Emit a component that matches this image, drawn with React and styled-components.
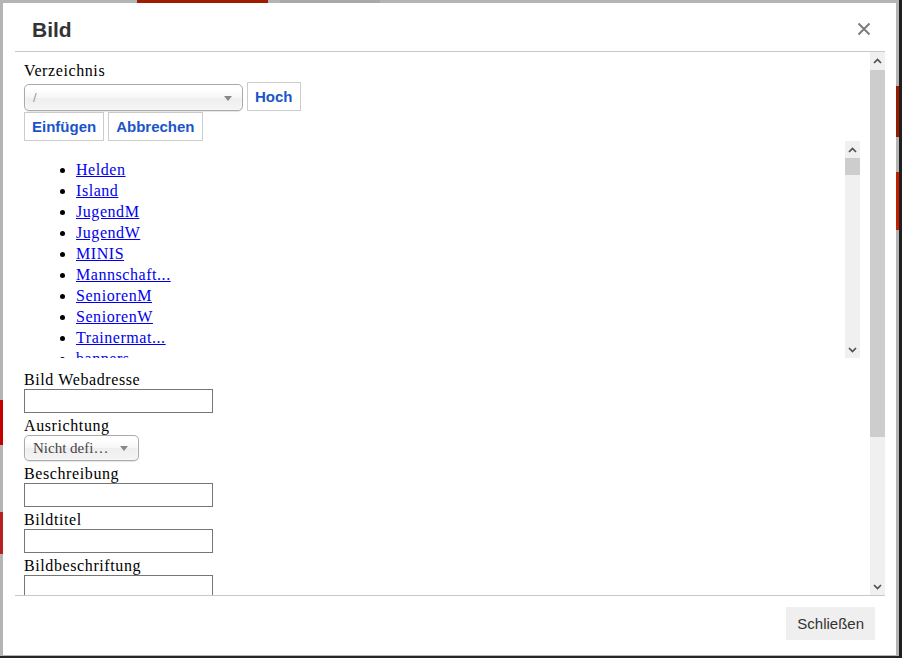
import React from 'react';
import styled, { createGlobalStyle } from 'styled-components';

const Global = createGlobalStyle`
  html, body { margin: 0; padding: 0; height: 100%; }
  body {
    background: #b4b4b4;
    overflow: hidden;
    font-family: "Liberation Serif", "Times New Roman", serif;
  }
`;

const Backdrop = styled.div`
  position: fixed;
  inset: 0;
  background: #b4b4b4;
  border-right: 3px solid #1f1f1f;
  border-bottom: 2px solid #262626;
`;

const Patch = styled.div`
  position: absolute;
  left: ${p => p.$x}px;
  top: ${p => p.$y}px;
  width: ${p => p.$w}px;
  height: ${p => p.$h}px;
  background: ${p => p.$c};
`;

const Modal = styled.div`
  position: fixed;
  left: 3px;
  top: 3px;
  width: 893px;
  height: 652px;
  box-sizing: border-box;
  padding: 0 11px 0 12px;
  background: #fff;
  display: flex;
  flex-direction: column;
`;

const Header = styled.div`
  flex: 0 0 49px;
  box-sizing: border-box;
  display: flex;
  align-items: flex-start;
  justify-content: space-between;
  padding: 15px 14px 0 17px;
  border-bottom: 1px solid #c8c8c8;
`;

const Title = styled.h4`
  margin: 0;
  font: bold 21px/24px "Liberation Sans", Arial, sans-serif;
  color: #333;
`;

const CloseButton = styled.button`
  margin-top: 4px;
  padding: 0;
  border: 0;
  background: none;
  width: 14px;
  height: 14px;
  display: flex;
  cursor: pointer;
`;

/* ---------- scrollbar (drawn) ---------- */
const ScrollBar = styled.div`
  flex: 0 0 15px;
  display: flex;
  flex-direction: column;
  background: #f0f0f0;
`;

const ScrollArrow = styled.div`
  flex: 0 0 17px;
  display: flex;
  align-items: center;
  justify-content: center;
`;

const ScrollTrack = styled.div`
  flex: 1 1 auto;
  display: flex;
  flex-direction: column;
`;

const ScrollThumb = styled.div`
  margin-top: ${p => p.$top}px;
  height: ${p => p.$height}px;
  background: #cdcdcd;
`;

function Chevron({ dir }) {
  return (
    <svg width="9" height="6" viewBox="0 0 9 6">
      <path
        d={dir === 'up' ? 'M1 5 L4.5 1.5 L8 5' : 'M1 1 L4.5 4.5 L8 1'}
        stroke="#505050"
        strokeWidth="1.7"
        fill="none"
      />
    </svg>
  );
}

function Scroller({ top, height }) {
  return (
    <ScrollBar>
      <ScrollArrow>
        <Chevron dir="up" />
      </ScrollArrow>
      <ScrollTrack>
        <ScrollThumb $top={top} $height={height} />
      </ScrollTrack>
      <ScrollArrow>
        <Chevron dir="down" />
      </ScrollArrow>
    </ScrollBar>
  );
}

const Body = styled.div`
  flex: 1 1 auto;
  min-height: 0;
  display: flex;
`;

const BodyContent = styled.div`
  flex: 1 1 auto;
  min-width: 0;
  overflow: hidden;
  padding: 6px 10px 0 9px;
  font-size: 16px;
  color: #000;
`;

const Label = styled.div`
  padding-top: 3px;
  line-height: 19px;
  font-size: 16px;
  letter-spacing: 0.6px;
`;

const Row = styled.div`
  display: flex;
  align-items: flex-end;
  gap: 4px;
  margin-top: ${p => p.$mt || 0}px;
`;

const SelectBox = styled.div`
  position: relative;
  box-sizing: border-box;
  width: ${p => p.$w}px;
  height: ${p => p.$h || 27}px;
  border: 1px solid #aaa;
  border-radius: 5px;
  background: linear-gradient(#ffffff 20%, #f6f6f6 50%, #eeeeee 52%, #f4f4f4 100%);
  box-shadow: 0 0 3px #fff inset, 0 1px 1px rgba(0, 0, 0, 0.1);
  display: flex;
  align-items: center;
  padding-left: ${p => p.$pl || 9}px;
  color: ${p => p.$color || '#999'};
  font-family: ${p => (p.$serif ? '"Liberation Serif", serif' : '"Liberation Sans", Arial, sans-serif')};
  font-size: ${p => p.$fs || 13}px;
  white-space: nowrap;
  &::after {
    content: '';
    position: absolute;
    right: ${p => p.$ar || 10}px;
    top: 50%;
    margin-top: -2px;
    border-left: 4px solid transparent;
    border-right: 4px solid transparent;
    border-top: 5px solid #888;
  }
`;

const ActionButton = styled.button`
  box-sizing: border-box;
  height: 29px;
  padding: 0 7px;
  background: #fff;
  border: 1px solid #ccc;
  color: #1a55c8;
  font: bold 15px "Liberation Sans", Arial, sans-serif;
  cursor: pointer;
`;

const ListFrame = styled.div`
  display: flex;
  margin-bottom: 9px;
  height: 217px;
`;

const ListViewport = styled.div`
  flex: 1 1 auto;
  overflow: hidden;
`;

const FolderList = styled.ul`
  margin: 0;
  padding: 18px 0 8px 52px;
  line-height: 21px;
  font-size: 16px;
  letter-spacing: 0.55px;
  list-style: disc;
`;

const FolderLink = styled.a`
  color: #0000ee;
  text-decoration: underline;
`;

const TextInput = styled.input`
  display: block;
  box-sizing: border-box;
  width: 189px;
  height: 24px;
  margin: 0;
  border: 1px solid #767676;
  background: #fff;
  padding: 1px 2px;
  font: 13px "Liberation Sans", Arial, sans-serif;
`;

const Footer = styled.div`
  flex: 0 0 60px;
  box-sizing: border-box;
  border-top: 1px solid #c8c8c8;
  display: flex;
  justify-content: flex-end;
  align-items: flex-start;
  padding: 11px 10px 0 0;
`;

const CloseFooterButton = styled.button`
  height: 33px;
  padding: 0 11px;
  border: 0;
  background: #efefef;
  color: #333;
  font: 15px "Liberation Sans", Arial, sans-serif;
  cursor: pointer;
`;

const folders = ['Helden', 'Island', 'JugendM', 'JugendW', 'MINIS', 'Mannschaft...', 'SeniorenM', 'SeniorenW', 'Trainermat...', 'banners', 'bilder', 'galerie'];

const fields = ['Breite', 'Höhe'];

export default function App() {
  return (
    <>
      <Global />
      <Backdrop>
        <Patch $x={137} $y={0} $w={131} $h={3} $c="#9f1c00" />
        <Patch $x={280} $y={0} $w={100} $h={3} $c="#a9a9a9" />
        <Patch $x={896} $y={86} $w={3} $h={51} $c="#9a1a00" />
        <Patch $x={896} $y={172} $w={3} $h={58} $c="#c02000" />
        <Patch $x={0} $y={400} $w={3} $h={45} $c="#c40000" />
        <Patch $x={0} $y={512} $w={3} $h={42} $c="#b52020" />
      </Backdrop>
      <Modal>
        <Header>
          <Title>Bild</Title>
          <CloseButton aria-label="Schließen">
            <svg width="14" height="14" viewBox="0 0 14 14">
              <path d="M1.5 1.5 L12.5 12.5 M12.5 1.5 L1.5 12.5" stroke="#7d7d7d" strokeWidth="2" fill="none" />
            </svg>
          </CloseButton>
        </Header>
        <Body>
          <BodyContent>
            <Label>Verzeichnis</Label>
            <Row $mt={2}>
              <SelectBox $w={219} $pl={8}>/</SelectBox>
              <ActionButton>Hoch</ActionButton>
            </Row>
            <Row $mt={1}>
              <ActionButton>Einfügen</ActionButton>
              <ActionButton>Abbrechen</ActionButton>
            </Row>
            <ListFrame>
              <ListViewport>
                <FolderList>
                  {folders.map(f => (
                    <li key={f}>
                      <FolderLink href="#">{f}</FolderLink>
                    </li>
                  ))}
                </FolderList>
              </ListViewport>
              <Scroller top={0} height={17} />
            </ListFrame>
            <Label>Bild Webadresse</Label>
            <TextInput />
            <Label>Ausrichtung</Label>
            <SelectBox $w={115} $h={26} $serif $fs={15} $color="#444" $pl={8} $ar={10}>Nicht defi…</SelectBox>
            <Label>Beschreibung</Label>
            <TextInput />
            <Label>Bildtitel</Label>
            <TextInput />
            <Label>Bildbeschriftung</Label>
            <TextInput />
            {fields.map(f => (
              <React.Fragment key={f}>
                <Label>{f}</Label>
                <TextInput />
              </React.Fragment>
            ))}
          </BodyContent>
          <Scroller top={1} height={367} />
        </Body>
        <Footer>
          <CloseFooterButton>Schließen</CloseFooterButton>
        </Footer>
      </Modal>
    </>
  );
}
